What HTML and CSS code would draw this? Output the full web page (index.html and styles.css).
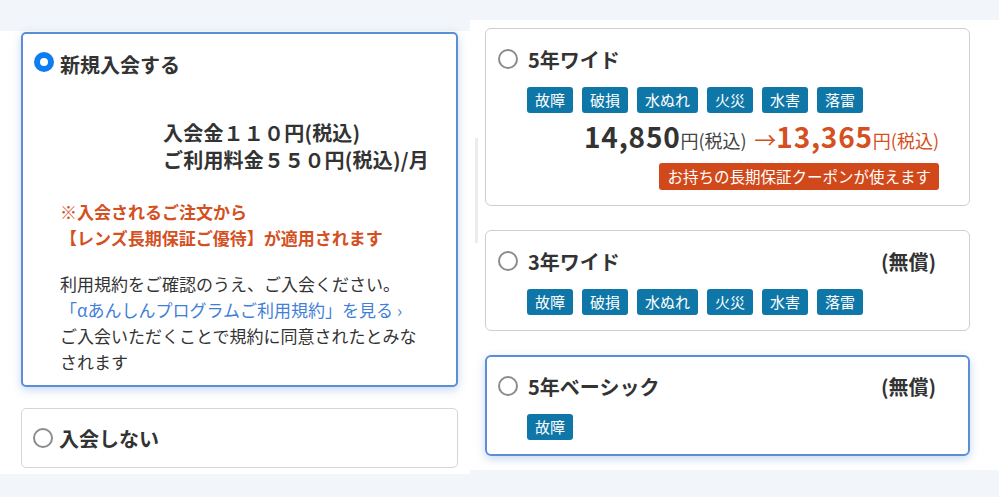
FILE: index.html
```html
<!DOCTYPE html>
<html lang="ja">
<head>
    <meta charset="UTF-8">
    <meta name="viewport" content="width=device-width, initial-scale=1.0">
    <title>αあんしんプログラム</title>
    <link rel="stylesheet" href="styles.css">
</head>
<body>
    <div class="page">
        <!-- 入会の選択 -->
        <div class="panel panel-left">
            <div class="plan plan-active">
                <div class="plan-head">
                    <span class="radio radio-on"></span>
                    <span class="plan-name">新規入会する</span>
                </div>
                <div class="fee">入会金１１０円(税込)<br>ご利用料金５５０円(税込)/月</div>
                <p class="notice">※入会されるご注文から<br>【レンズ長期保証ご優待】が適用されます</p>
                <p class="terms">
                    利用規約をご確認のうえ、ご入会ください。<br>
                    <a href="#" class="terms-link">「αあんしんプログラムご利用規約」を見る ›</a><br>
                    ご入会いただくことで規約に同意されたとみなされます
                </p>
            </div>
            <div class="plan plan-small">
                <div class="plan-head">
                    <span class="radio"></span>
                    <span class="plan-name">入会しない</span>
                </div>
            </div>
        </div>

        <!-- 長期保証の選択 -->
        <div class="panel panel-right">
            <div class="scroll-thumb"></div>

            <div class="warranty">
                <div class="plan-head">
                    <span class="radio"></span>
                    <span class="plan-name">5年ワイド</span>
                </div>
                <div class="tags">
                    <span class="tag">故障</span>
                    <span class="tag">破損</span>
                    <span class="tag">水ぬれ</span>
                    <span class="tag">火災</span>
                    <span class="tag">水害</span>
                    <span class="tag">落雷</span>
                </div>
                <div class="price">
                    <span class="amount">14,850</span><span class="unit">円(税込)</span>
                    <span class="arrow">→</span><span class="amount amount-sale">13,365</span><span class="unit unit-sale">円(税込)</span>
                </div>
                <div class="coupon-row">
                    <span class="coupon">お持ちの長期保証クーポンが使えます</span>
                </div>
            </div>

            <div class="warranty">
                <div class="plan-head">
                    <span class="radio"></span>
                    <span class="plan-name">3年ワイド</span>
                    <span class="free">(無償)</span>
                </div>
                <div class="tags">
                    <span class="tag">故障</span>
                    <span class="tag">破損</span>
                    <span class="tag">水ぬれ</span>
                    <span class="tag">火災</span>
                    <span class="tag">水害</span>
                    <span class="tag">落雷</span>
                </div>
            </div>

            <div class="warranty warranty-active">
                <div class="plan-head">
                    <span class="radio"></span>
                    <span class="plan-name">5年ベーシック</span>
                    <span class="free">(無償)</span>
                </div>
                <div class="tags">
                    <span class="tag">故障</span>
                </div>
            </div>
        </div>
    </div>
</body>
</html>
```

FILE: styles.css
```css
* {
    margin: 0;
    padding: 0;
    box-sizing: border-box;
}

body {
    width: 999px;
    height: 497px;
    overflow: hidden;
    background-color: #f2f5f9;
    font-family: "Noto Sans CJK JP", "Noto Sans", sans-serif;
    color: #333;
}

.page {
    display: flex;
    align-items: flex-start;
}

.panel {
    background-color: #fff;
}

.panel-left {
    width: 470px;
    height: 443px;
    margin-top: 31px;
    padding: 1px 12px 0 21px;
}

.panel-right {
    position: relative;
    flex: 1;
    height: 450px;
    margin-top: 20px;
    padding: 8px 29px 0 15px;
}

/* faint scrollbar at the left edge */
.scroll-thumb {
    position: absolute;
    left: 5px;
    top: 118px;
    width: 3px;
    height: 105px;
    background-color: #ececec;
}

/* cards */
.plan {
    border: 1px solid #d6d6d6;
    border-radius: 5px;
    background-color: #fff;
}

.plan-active {
    border: 2px solid #5b8ed6;
    box-shadow: 0 3px 10px rgba(70, 130, 210, 0.3);
    padding: 16px 30px 10px 11px;
}

.plan-small {
    margin-top: 21px;
    padding: 15px 11px;
}

.plan-head {
    display: flex;
    align-items: center;
    height: 28px;
}

.radio {
    width: 20px;
    height: 20px;
    border: 2px solid #8c8c8c;
    border-radius: 50%;
    flex-shrink: 0;
}

.radio-on {
    border: 6px solid #0d7df2;
    margin-top: -4px;
}

.plan-name {
    margin-left: 6px;
    font-size: 20px;
    font-weight: bold;
    color: #333;
}

.fee {
    margin: 41px 0 0 129px;
    font-size: 20px;
    font-weight: bold;
    line-height: 27px;
    letter-spacing: 0.2px;
    white-space: nowrap;
    color: #333;
}

.notice {
    margin: 26px 0 0 26px;
    font-size: 17px;
    font-weight: bold;
    line-height: 26px;
    color: #d4501f;
}

.terms {
    margin: 20px 0 0 26px;
    font-size: 17px;
    line-height: 26px;
    color: #333;
}

.terms-link {
    color: #3f7fd9;
    text-decoration: none;
}

/* warranty cards */
.warranty {
    border: 1px solid #cfcfcf;
    border-radius: 6px;
    padding: 16px 33px 15px 12px;
    margin-bottom: 24px;
}

.warranty-active {
    border: 2px solid #5b8ed6;
    padding: 15px 32px 14px 11px;
    box-shadow: 0 3px 10px rgba(70, 130, 210, 0.3);
}

.warranty .plan-name {
    margin-left: 10px;
}

.free {
    margin-left: auto;
    font-size: 20px;
    font-weight: bold;
}

.tags {
    display: flex;
    gap: 9px;
    margin: 14px 0 0 29px;
}

.tag {
    height: 26px;
    line-height: 26px;
    padding: 0 8px;
    border-radius: 3px;
    background-color: #0f77a8;
    color: #fff;
    font-size: 15px;
}

.price {
    height: 32px;
    line-height: 32px;
    margin: 7px -3px 0 0;
    text-align: right;
    white-space: nowrap;
}

.amount {
    font-size: 28px;
    font-weight: bold;
    letter-spacing: 0.8px;
    color: #333;
}

.unit {
    font-size: 18px;
    color: #444;
}

.arrow {
    margin-left: 4px;
    font-size: 22px;
    color: #d4501f;
}

.amount-sale,
.unit-sale {
    color: #d4501f;
}

.coupon-row {
    margin: 11px -3px 0 0;
    text-align: right;
    line-height: 0;
}

.coupon {
    display: inline-block;
    height: 27px;
    line-height: 27px;
    padding: 0 8px;
    border-radius: 3px;
    background-color: #d1491a;
    color: #fff;
    font-size: 15.5px;
}
```
